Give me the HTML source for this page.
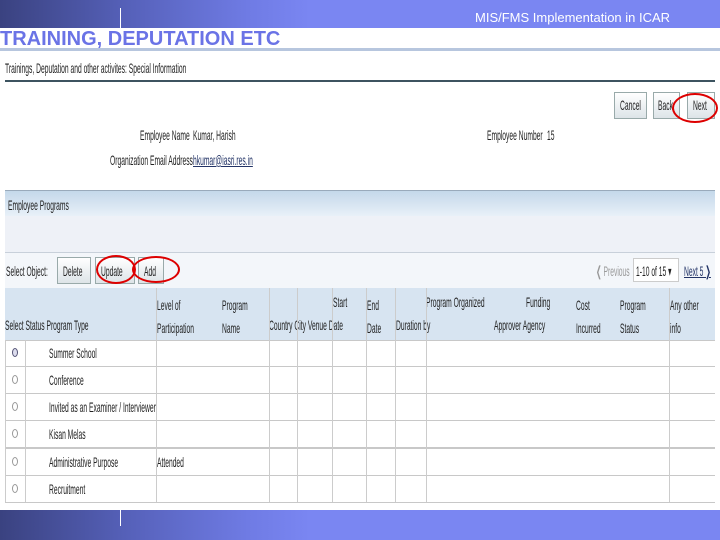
<!DOCTYPE html>
<html><head><meta charset="utf-8"><style>
*{margin:0;padding:0;box-sizing:border-box}
body{width:720px;height:540px;position:relative;background:#fff;font-family:"Liberation Sans",sans-serif;overflow:hidden}
.a{position:absolute;white-space:nowrap}
.n{position:absolute;white-space:nowrap;font-size:14px;color:#222;transform:scaleX(0.48);transform-origin:0 0}
.bar{position:absolute;left:0;width:720px;background:#7a86f2}
.tex{position:absolute;left:0;width:310px;background:linear-gradient(90deg,#3a4280 0%,#5560b8 40%,#6f7be4 80%,#7a86f2 100%)}
.btn{position:absolute;border:1px solid #9aa;background:linear-gradient(#fff,#dde4e8)}
.vl{position:absolute;width:1px;background:#ccc}
.hl{position:absolute;height:1px;background:#c8c8c8;left:5px;width:710px}
.ring{position:absolute;border:2px solid #d00;border-radius:50%}
.rad{position:absolute;width:6px;height:9px;border:1px solid #999;border-radius:50%}
</style></head><body>
<div class="bar" style="top:0;height:28px"></div>
<div class="tex" style="top:0;height:28px"></div>
<div class="a" style="left:120px;top:8px;width:1px;height:20px;background:#fff"></div>
<div class="a" style="left:475px;top:10px;font-size:13px;color:#fff">MIS/FMS Implementation in ICAR</div>
<div class="a" style="left:0;top:28px;font-size:20px;font-weight:bold;color:#6a73e6">TRAINING, DEPUTATION ETC</div>
<div class="a" style="left:0;top:48px;width:720px;height:3px;background:#b7c6de"></div>
<div class="n" style="left:5px;top:60px">Trainings, Deputation and other activites: Special Information</div>
<div class="a" style="left:5px;top:80px;width:710px;height:2px;background:#3d5360"></div>
<div class="btn" style="left:614px;top:92px;width:33px;height:27px"></div><div class="n" style="left:620px;top:97px">Cancel</div>
<div class="btn" style="left:653px;top:92px;width:27px;height:27px"></div><div class="n" style="left:658px;top:97px">Back</div>
<div class="btn" style="left:687px;top:92px;width:28px;height:27px"></div><div class="n" style="left:693px;top:97px">Next</div>
<div class="ring" style="left:672px;top:93px;width:46px;height:30px"></div>
<div class="n" style="left:140px;top:127px">Employee Name</div><div class="n" style="left:193px;top:127px">Kumar, Harish</div>
<div class="n" style="left:110px;top:152px">Organization Email Address</div><div class="n" style="left:193px;top:152px;color:#236;text-decoration:underline">hkumar@iasri.res.in</div>
<div class="n" style="left:487px;top:127px">Employee Number</div><div class="n" style="left:547px;top:127px">15</div>
<div class="a" style="left:5px;top:190px;width:710px;height:26px;background:linear-gradient(#c4d8ea,#e8f0f8);border-top:1px solid #9ab"></div>
<div class="n" style="left:8px;top:197px">Employee Programs</div>
<div class="a" style="left:5px;top:216px;width:710px;height:37px;background:#eef1f7;border-bottom:1px solid #c8d0da"></div>
<div class="a" style="left:5px;top:253px;width:710px;height:35px;background:#f3f6fa"></div>
<div class="n" style="left:6px;top:263px">Select Object:</div>
<div class="btn" style="left:57px;top:257px;width:34px;height:27px"></div><div class="n" style="left:63px;top:263px">Delete</div>
<div class="btn" style="left:95px;top:257px;width:40px;height:27px"></div><div class="n" style="left:101px;top:263px">Update</div>
<div class="btn" style="left:138px;top:257px;width:26px;height:27px"></div><div class="n" style="left:144px;top:263px">Add</div>
<div class="ring" style="left:96px;top:255px;width:40px;height:29px"></div>
<div class="ring" style="left:132px;top:256px;width:48px;height:27px"></div>
<div class="n" style="left:596px;top:263px;color:#999">&#10094; Previous</div>
<div class="a" style="left:633px;top:258px;width:46px;height:24px;background:#fff;border:1px solid #ccc"></div>
<div class="n" style="left:636px;top:263px">1-10 of 15 &#9662;</div>
<div class="n" style="left:684px;top:263px;color:#236;text-decoration:underline">Next 5 &#10095;</div>
<div class="a" style="left:5px;top:288px;width:710px;height:52px;background:#d7e4f1"></div>
<div class="n" style="left:5px;top:317px">Select Status Program Type</div>
<div class="n" style="left:157px;top:294px;line-height:23px">Level of<br>Participation</div>
<div class="n" style="left:222px;top:294px;line-height:23px">Program<br>Name</div>
<div class="n" style="left:269px;top:317px">Country City Venue Date</div>
<div class="n" style="left:333px;top:294px">Start</div>
<div class="n" style="left:367px;top:294px;line-height:23px">End<br>Date</div>
<div class="n" style="left:396px;top:317px">Duration by</div>
<div class="n" style="left:426px;top:294px">Program Organized</div>
<div class="n" style="left:494px;top:317px">Approver Agency</div>
<div class="n" style="left:526px;top:294px">Funding</div>
<div class="n" style="left:576px;top:294px;line-height:23px">Cost<br>Incurred</div>
<div class="n" style="left:620px;top:294px;line-height:23px">Program<br>Status</div>
<div class="n" style="left:670px;top:294px;line-height:23px">Any other<br>info</div>
<div class="hl" style="top:340px"></div><div class="hl" style="top:366px"></div><div class="hl" style="top:393px"></div><div class="hl" style="top:420px"></div><div class="hl" style="top:447px;height:2px"></div><div class="hl" style="top:475px"></div><div class="hl" style="top:502px"></div>
<div class="vl" style="left:5px;top:340px;height:162px"></div>
<div class="vl" style="left:25px;top:340px;height:162px"></div>
<div class="vl" style="left:156px;top:288px;height:214px"></div>
<div class="vl" style="left:269px;top:288px;height:214px"></div>
<div class="vl" style="left:297px;top:288px;height:214px"></div>
<div class="vl" style="left:332px;top:288px;height:214px"></div>
<div class="vl" style="left:366px;top:288px;height:214px"></div>
<div class="vl" style="left:395px;top:288px;height:214px"></div>
<div class="vl" style="left:426px;top:288px;height:214px"></div>
<div class="vl" style="left:669px;top:288px;height:214px"></div>
<div class="rad" style="left:12px;top:348px;border-color:#557;background:#dde"></div>
<div class="rad" style="left:12px;top:375px"></div><div class="rad" style="left:12px;top:402px"></div><div class="rad" style="left:12px;top:429px"></div><div class="rad" style="left:12px;top:457px"></div><div class="rad" style="left:12px;top:484px"></div>
<div class="n" style="left:49px;top:345px">Summer School</div>
<div class="n" style="left:49px;top:372px">Conference</div>
<div class="n" style="left:49px;top:399px">Invited as an Examiner / Interviewer</div>
<div class="n" style="left:49px;top:426px">Kisan Melas</div>
<div class="n" style="left:49px;top:454px">Administrative Purpose</div>
<div class="n" style="left:157px;top:454px">Attended</div>
<div class="n" style="left:49px;top:481px">Recruitment</div>
<div class="bar" style="top:510px;height:30px"></div>
<div class="tex" style="top:510px;height:30px"></div>
<div class="a" style="left:120px;top:510px;width:1px;height:16px;background:#fff"></div>
</body></html>
